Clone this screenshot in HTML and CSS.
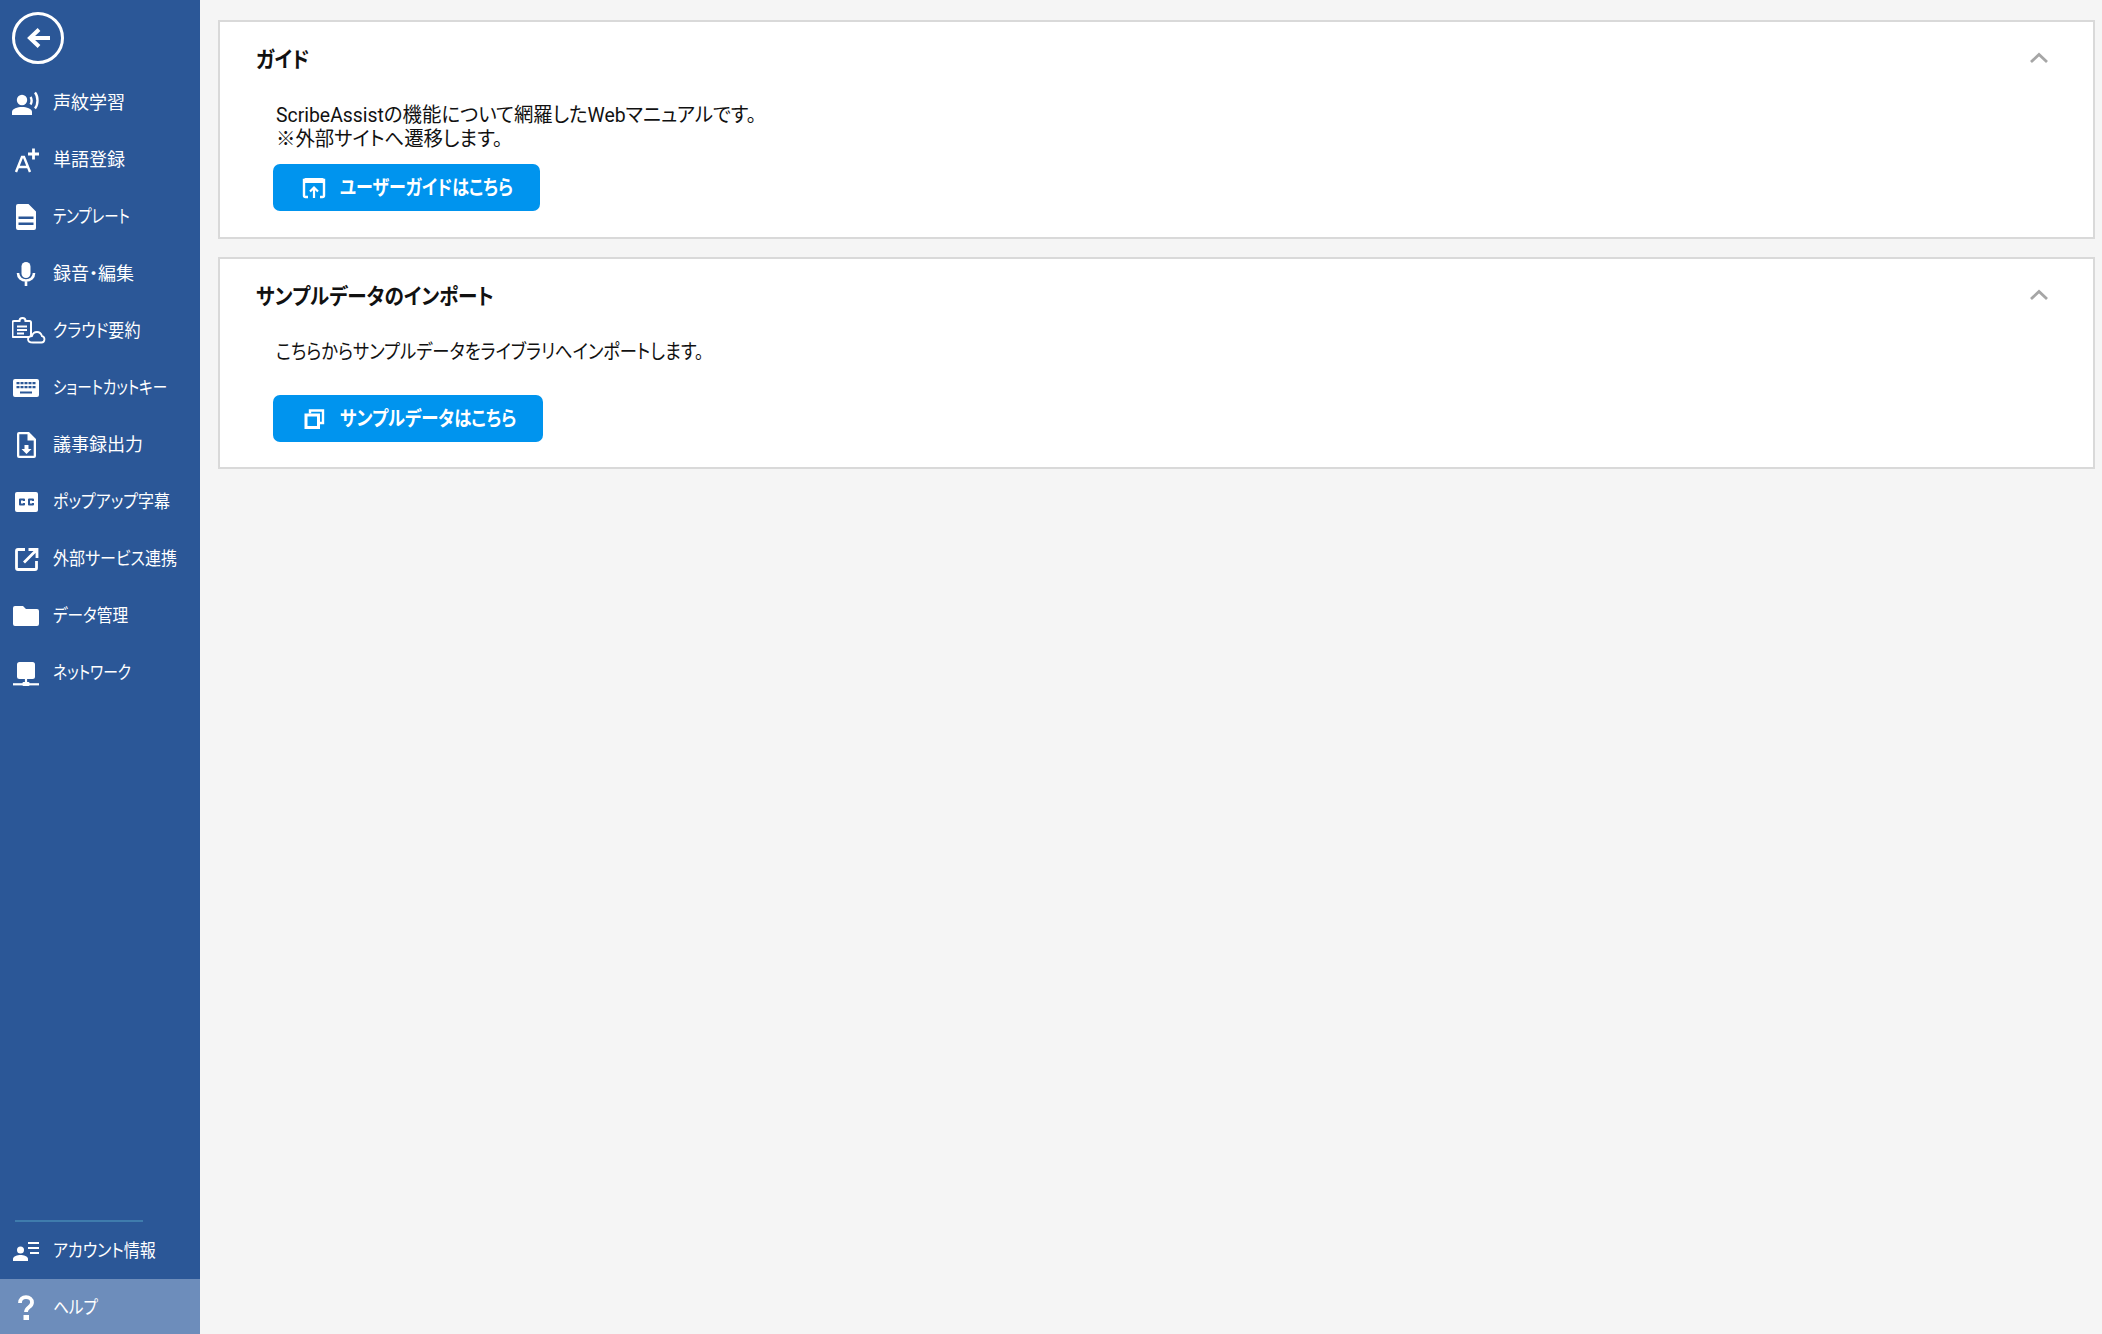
FILE: index.html
```html
<!DOCTYPE html>
<html lang="ja">
<head>
<meta charset="utf-8">
<title>ヘルプ</title>
<link rel="stylesheet" href="styles.css">
</head>
<body>
<div class="app">
  <nav class="sidebar">
    <button class="back" aria-label="戻る">
      <svg viewBox="0 0 52 52" width="52" height="52"><circle cx="26" cy="26" r="24.5" fill="none" stroke="#fff" stroke-width="3"/><path d="M38 26H19M27 17.500l-9 8.500 9 8.500" fill="none" stroke="#fff" stroke-width="4"/></svg>
    </button>
    <ul class="menu">
      <li class="item"><svg class="icon" viewBox="0 0 28 28"><circle cx="10" cy="12" r="5.200" fill="#fff"/><path d="M0 27v-3c0-3.500 5.500-5 10-5s10 1.500 10 5v3z" fill="#fff"/><path d="M18.500 9c1.500 2 1.500 5.500 0 7.500M23 4.500c3.300 4 3.300 12 0 16" fill="none" stroke="#fff" stroke-width="2.400"/></svg><span class="sq">声紋学習</span></li>
      <li class="item"><svg class="icon" viewBox="0 0 28 28"><path d="M4 27 10 12h2l6 15M6.500 22h9" fill="none" stroke="#fff" stroke-width="2.400"/><path d="M21.500 3.500v11M16 9h11" fill="none" stroke="#fff" stroke-width="2.800"/></svg><span class="sq">単語登録</span></li>
      <li class="item"><svg class="icon" viewBox="0 0 28 28"><path fill-rule="evenodd" d="M6 2h10.500L24 9.500V26a2 2 0 0 1-2 2H6a2 2 0 0 1-2-2V4a2 2 0 0 1 2-2zM6.500 14.500V17h15v-2.500zm0 6V23h15v-2.500z" fill="#fff"/></svg><span class="sq k80">テンプレート</span></li>
      <li class="item"><svg class="icon" viewBox="0 0 28 28"><rect x="9.500" y="3" width="9" height="16" rx="4.500" fill="#fff"/><path d="M6 14c0 4.500 3.500 7.500 8 7.500s8-3 8-7.500M14 21.500V27" fill="none" stroke="#fff" stroke-width="2.600"/></svg><span class="sq">録音・編集</span></li>
      <li class="item"><svg class="icon wide" viewBox="0 0 34 28"><g transform="translate(-1.500 1.500)"><path d="M5 3.500h4a3 3 0 0 1 6 0h4a1.500 1.500 0 0 1 1.500 1.500v14.500H3a1 1 0 0 1-1-1V5a1.500 1.500 0 0 1 1.500-1.500z" fill="none" stroke="#fff" stroke-width="2"/><path d="M6.500 9h10M6.500 12.500h10M6.500 16h7" stroke="#fff" stroke-width="1.800"/></g><path d="M21 26.500h8.500a3.200 3.200 0 0 0 .5-6.300c-.8-2.800-2.800-4.200-5-4.200-2.500 0-4.400 1.600-5 4-2.800.3-4 1.700-4 3.200s1.300 3.300 5 3.300z" fill="#2b5797" stroke="#fff" stroke-width="1.800"/></svg><span class="sq k89">クラウド要約</span></li>
      <li class="item"><svg class="icon" viewBox="0 0 28 28"><path fill-rule="evenodd" d="M3 6h22a2 2 0 0 1 2 2v14a2 2 0 0 1-2 2H3a2 2 0 0 1-2-2V8a2 2 0 0 1 2-2zm1.500 3v2.200h3V9zm4 0v2.200h3V9zm4 0v2.200h3V9zm4 0v2.200h3V9zm4 0v2.200h3V9zM4.500 13v2.200h3V13zm4 0v2.200h3V13zm4 0v2.200h3V13zm4 0v2.200h3V13zm4 0v2.200h3V13zM8 18.500v2h12v-2z" fill="#fff"/></svg><span class="sq k81">ショートカットキー</span></li>
      <li class="item"><svg class="icon" viewBox="0 0 28 28"><path fill-rule="evenodd" d="M7 2h10l7 7v17a2 2 0 0 1-2 2H7a2 2 0 0 1-2-2V4a2 2 0 0 1 2-2zm.300 2.300v21.400h14.400V10.500H15.500V4.300zM12.500 15h4v4h3l-5 5-5-5h3z" fill="#fff"/></svg><span class="sq">議事録出力</span></li>
      <li class="item"><svg class="icon" viewBox="0 0 28 28"><path fill-rule="evenodd" d="M5 5h19a2 2 0 0 1 2 2v16a2 2 0 0 1-2 2H5a2 2 0 0 1-2-2V7a2 2 0 0 1 2-2zm2 7.500v5a1 1 0 0 0 1 1h4a1 1 0 0 0 1-1V16h-2v.5H9v-3h2v.5h2v-1.500a1 1 0 0 0-1-1H8a1 1 0 0 0-1 1zm9 0v5a1 1 0 0 0 1 1h4a1 1 0 0 0 1-1V16h-2v.5h-2v-3h2v.5h2v-1.500a1 1 0 0 0-1-1h-4a1 1 0 0 0-1 1z" fill="#fff"/></svg><span class="sq k89">ポップアップ字幕</span></li>
      <li class="item"><svg class="icon" viewBox="0 0 28 28"><path d="M13 5.500H6A1.500 1.500 0 0 0 4.500 7v17A1.500 1.500 0 0 0 6 25.500h17a1.500 1.500 0 0 0 1.500-1.500v-7" fill="none" stroke="#fff" stroke-width="2.800"/><path d="M16.500 5.500h8.500V14M24.500 6 12 18.500" fill="none" stroke="#fff" stroke-width="2.800"/></svg><span class="sq k89">外部サービス連携</span></li>
      <li class="item"><svg class="icon" viewBox="0 0 28 28"><path d="M3 5h8l3 3h11a2 2 0 0 1 2 2v13a2 2 0 0 1-2 2H3a2 2 0 0 1-2-2V7a2 2 0 0 1 2-2z" fill="#fff"/></svg><span class="sq k87">データ管理</span></li>
      <li class="item"><svg class="icon" viewBox="0 0 28 28"><rect x="5" y="4" width="18" height="17" rx="2.500" fill="#fff"/><path d="M1 26.300h26" stroke="#fff" stroke-width="2.200"/><rect x="10.500" y="24" width="7" height="4" rx="1" fill="#fff"/><path d="M14 20v5" stroke="#fff" stroke-width="2.200"/></svg><span class="sq k82">ネットワーク</span></li>
    </ul>
    <div class="bottom">
      <hr class="divider">
      <div class="item"><svg class="icon" viewBox="0 0 28 28"><circle cx="8.500" cy="14" r="3.500" fill="#fff"/><path d="M1 25v-2c0-2.700 4.500-4 7.500-4s7.500 1.300 7.500 4v2z" fill="#fff"/><path d="M16 7h11M16 12h11M18 17h9" stroke="#fff" stroke-width="2.200"/></svg><span class="sq k89">アカウント情報</span></div>
      <div class="item active"><svg class="icon" viewBox="0 0 28 28"><path d="M8 11c0-3.800 2.500-5.800 6-5.800s6 2 6 5.200c0 4.700-6 4.800-6 9.600" fill="none" stroke="#fff" stroke-width="3.800"/><rect x="11.500" y="23" width="5.500" height="5" fill="#fff"/></svg><span class="sq k87">ヘルプ</span></div>
    </div>
  </nav>
  <main class="content">
    <section class="card guide">
      <header class="card-head">
        <h2 class="sq k89">ガイド</h2>
        <svg class="chev" viewBox="0 0 20 12"><path d="M2 10l8-7.500 8 7.500" fill="none" stroke="#a6a6a6" stroke-width="2.800"/></svg>
      </header>
      <div class="card-body">
        <p class="sq k97">ScribeAssistの機能について網羅したWebマニュアルです。<br>※外部サイトへ遷移します。</p>
        <button class="btn btn-guide">
          <svg class="btn-icon" viewBox="0 0 24 24"><path d="M6 21H3.500A1.500 1.500 0 0 1 2 19.500V4h20v15.500a1.500 1.500 0 0 1-1.500 1.500H18" fill="none" stroke="#fff" stroke-width="2.400"/><path d="M2 3.500A1.500 1.500 0 0 1 3.500 2h17A1.500 1.500 0 0 1 22 3.500V7H2z" fill="#fff"/><path d="M12 22V12M8 15.500l4-4 4 4" fill="none" stroke="#fff" stroke-width="2.200"/></svg>
          <span class="sq k85">ユーザーガイドはこちら</span>
        </button>
      </div>
    </section>
    <section class="card sample">
      <header class="card-head">
        <h2 class="sq k89">サンプルデータのインポート</h2>
        <svg class="chev" viewBox="0 0 20 12"><path d="M2 10l8-7.500 8 7.500" fill="none" stroke="#a6a6a6" stroke-width="2.800"/></svg>
      </header>
      <div class="card-body">
        <p class="sq k865">こちらからサンプルデータをライブラリへインポートします。</p>
        <button class="btn btn-sample">
          <svg class="btn-icon" viewBox="0 0 24 24"><path d="M8 6.500V3.500h13V16h-3.500" fill="none" stroke="#fff" stroke-width="2.400"/><rect x="4" y="8" width="12.500" height="12.500" fill="none" stroke="#fff" stroke-width="3"/></svg>
          <span class="sq k87">サンプルデータはこちら</span>
        </button>
      </div>
    </section>
  </main>
</div>
</body>
</html>
```
FILE: styles.css
```css
* { box-sizing: border-box; }
html, body { margin: 0; height: 100%; }
body {
  font-family: Roboto, "Noto Sans CJK JP", sans-serif;
  font-feature-settings: "palt";
  background: #f5f5f5;
  color: #111;
  overflow: hidden;
}
/* The reference's Japanese UI face has narrower kana than Noto; these squeeze a label to match. */
.sq { transform-origin: left center; }
.k97 { transform: scaleX(.97); }
.k89 { transform: scaleX(.89); }
.k87 { transform: scaleX(.87); }
.k865 { transform: scaleX(.865); }
.k85 { transform: scaleX(.85); }
.k82 { transform: scaleX(.82); }
.k81 { transform: scaleX(.81); }
.k80 { transform: scaleX(.8); }
.app { display: flex; height: 1334px; }
.sidebar {
  width: 200px;
  flex: none;
  background: #2b5797;
  color: #fff;
  display: flex;
  flex-direction: column;
}
.back {
  display: block;
  width: 52px;
  height: 52px;
  margin: 12px 0 0 12px;
  padding: 0;
  border: 0;
  background: none;
}
.back svg { display: block; }
.menu { list-style: none; margin: 10px 0 0; padding: 0; }
.item {
  height: 57px;
  display: flex;
  align-items: center;
  padding-left: 12px;
  font-size: 18px;
  gap: 13px;
}
.item span {
  display: inline-block;
  white-space: nowrap;
  padding-bottom: 3px;
}
.icon { width: 28px; height: 28px; flex: none; margin-bottom: 1px; }
.icon.wide { width: 34px; margin-right: -6px; }
.bottom { margin-top: auto; }
.divider {
  margin: 0 0 0 15px;
  width: 128px;
  height: 2px;
  border: 0;
  background: #3f7cad;
}
.item.active { background: #6d8dbb; height: 55px; }
.item.active span { padding-bottom: 1px; }
.content {
  flex: 1;
  padding: 20px 7px 0 18px;
  display: flex;
  flex-direction: column;
  gap: 18px;
  min-width: 0;
}
.card {
  background: #fff;
  border: 2px solid #d9d9d9;
}
.guide { height: 219px; }
.sample { height: 212px; }
.card-head {
  display: flex;
  justify-content: space-between;
  align-items: center;
  padding: 20px 44px 0 36px;
  height: 56px;
}
.card-head h2 {
  margin: 0;
  font-size: 22px;
  font-weight: 700;
  line-height: 30px;
  white-space: nowrap;
}
.chev { width: 20px; height: 12px; margin-top: -5px; }
.card-body { padding: 25px 0 0 53px; }
.card-body p {
  margin: 0 0 0 3px;
  font-size: 20px;
  line-height: 24px;
  white-space: nowrap;
}
.btn {
  display: flex;
  align-items: center;
  gap: 14px;
  margin-top: 13px;
  height: 47px;
  padding: 0 0 0 29px;
  border: 0;
  border-radius: 7px;
  background: #0094ee;
  color: #fff;
  font: inherit;
  font-feature-settings: inherit;
  font-size: 20px;
  font-weight: 700;
}
.btn span { display: inline-block; white-space: nowrap; padding-bottom: 2px; }
.btn-guide { width: 267px; }
.btn-sample { width: 270px; margin-top: 31px; }
.btn-icon { width: 24px; height: 24px; flex: none; }
```
